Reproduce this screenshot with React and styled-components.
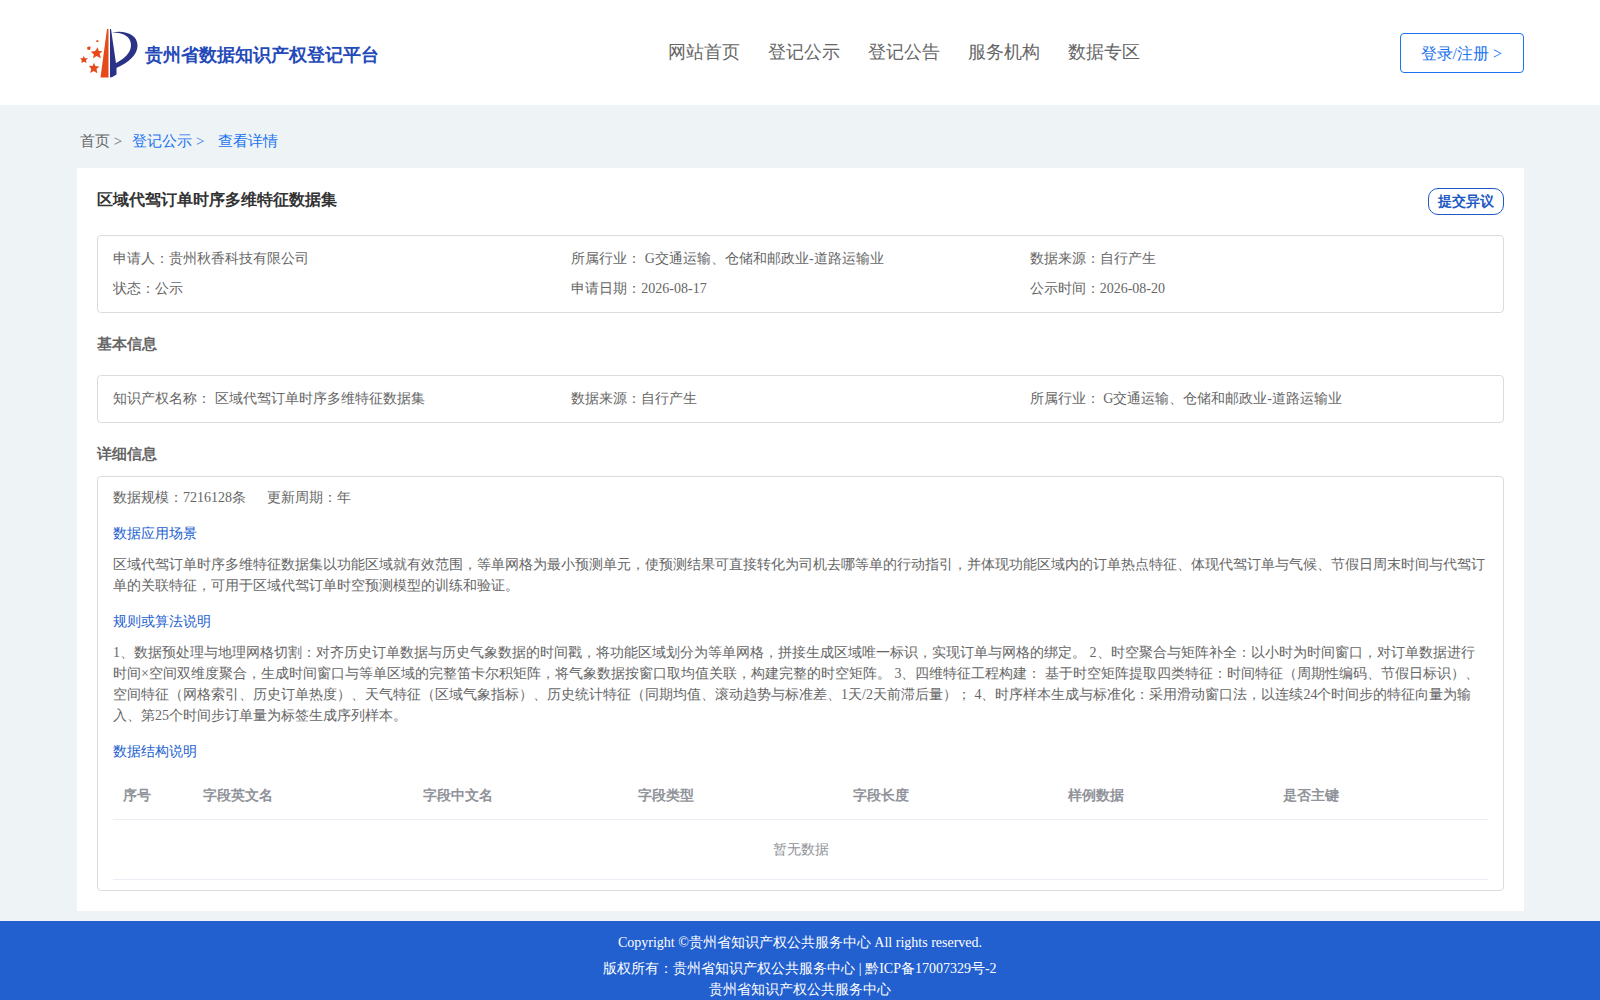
import React from 'react';
import {styled, createGlobalStyle} from 'styled-components';

const navItems = ['网站首页', '登记公示', '登记公告', '服务机构', '数据专区'];

const summary = [
  '申请人：贵州秋香科技有限公司',
  '所属行业： G交通运输、仓储和邮政业-道路运输业',
  '数据来源：自行产生',
  '状态：公示',
  '申请日期：2026-08-17',
  '公示时间：2026-08-20',
];

const basic = [
  '知识产权名称： 区域代驾订单时序多维特征数据集',
  '数据来源：自行产生',
  '所属行业： G交通运输、仓储和邮政业-道路运输业',
];

const columns = [
  {title: '序号', width: '80px'},
  {title: '字段英文名', width: '16%'},
  {title: '字段中文名'},
  {title: '字段类型'},
  {title: '字段长度'},
  {title: '样例数据'},
  {title: '是否主键'},
];

const Logo = () => (
  <svg width="58" height="50" viewBox="0 0 58 50" aria-hidden="true">
    <path d="M27 1L28.500 1V49.500H20.500Z" fill="#e64a19" />
    <path d="M30 1L31 1L36.500 39V46.500Q33 49 30 49.500Z" fill="#2a3287" />
    <path d="M32 4.500C46 2 57 7 57.500 17C58 26 49 35 35 40.500L34.500 36C44 31 51 25 51 17C51 9 44 4.500 32 4.500Z" fill="#2a3287" />
    <g fill="#e64a19">
      <path d="M17.800 19.200L18.700 22.900L22.600 23.300L19.600 25.800L21 30.200L16.600 28L12.900 30.500L13.900 26.400L10.800 23.700L15.200 23.100Z" />
      <path d="M14 34.800L15.500 38.300L19.600 38.500L16.500 41.100L17.400 45.200L13.700 43L10.200 45L11.200 40.900L8.900 37.800L12.600 38.100Z" />
      <path d="M3.500 27.800L5 30.200L8 30.100L5.900 32.300L6.600 35L4 33.800L1.300 35L1.800 32.400L0.300 30.100L2.900 30.300Z" />
      <path d="M9.200 18.200L10.800 19.600L9.800 22L7.600 21.700L7 19.500Z" />
      <path d="M17 12L18.600 12.700L18.300 14L16.600 13.900L16 13Z" />
    </g>
  </svg>
);

const App = () => {
  return (
    <>
      <GlobalStyle />
      <Header>
        <Brand href="#">
          <Logo />
          <span>贵州省数据知识产权登记平台</span>
        </Brand>
        <Nav>
          {navItems.map((item) => (
            <a key={item} href="#">{item}</a>
          ))}
        </Nav>
        <LoginButton type="button">登录/注册 &gt;</LoginButton>
      </Header>

      <Main>
        <Breadcrumb>
          <Crumb href="#">首页 &gt;</Crumb>
          <Crumb href="#" $active>登记公示 &gt;</Crumb>
          <Crumb href="#" $active>查看详情</Crumb>
        </Breadcrumb>

        <Card>
          <TitleRow>
            <h1>区域代驾订单时序多维特征数据集</h1>
            <ObjectionButton type="button">提交异议</ObjectionButton>
          </TitleRow>

          <InfoGrid>
            {summary.map((text) => (
              <span key={text}>{text}</span>
            ))}
          </InfoGrid>

          <SectionTitle $gap="20px">基本信息</SectionTitle>
          <InfoGrid>
            {basic.map((text) => (
              <span key={text}>{text}</span>
            ))}
          </InfoGrid>

          <SectionTitle $gap="11px">详细信息</SectionTitle>
          <Detail>
            <Scale>
              <span>数据规模：7216128条</span>
              <span>更新周期：年</span>
            </Scale>
            <h3>数据应用场景</h3>
            <p>
              区域代驾订单时序多维特征数据集以功能区域就有效范围，等单网格为最小预测单元，使预测结果可直接转化为司机去哪等单的行动指引，并体现功能区域内的订单热点特征、体现代驾订单与气候、节假日周末时间与代驾订单的关联特征，可用于区域代驾订单时空预测模型的训练和验证。
            </p>
            <h3>规则或算法说明</h3>
            <p>
              1、数据预处理与地理网格切割：对齐历史订单数据与历史气象数据的时间戳，将功能区域划分为等单网格，拼接生成区域唯一标识，实现订单与网格的绑定。 2、时空聚合与矩阵补全：以小时为时间窗口，对订单数据进行时间×空间双维度聚合，生成时间窗口与等单区域的完整笛卡尔积矩阵，将气象数据按窗口取均值关联，构建完整的时空矩阵。 3、四维特征工程构建： 基于时空矩阵提取四类特征：时间特征（周期性编码、节假日标识）、空间特征（网格索引、历史订单热度）、天气特征（区域气象指标）、历史统计特征（同期均值、滚动趋势与标准差、1天/2天前滞后量）； 4、时序样本生成与标准化：采用滑动窗口法，以连续24个时间步的特征向量为输入、第25个时间步订单量为标签生成序列样本。
            </p>
            <h3>数据结构说明</h3>
            <Table>
              <colgroup>
                {columns.map((col) => (
                  <Col key={col.title} $width={col.width} />
                ))}
              </colgroup>
              <thead>
                <tr>
                  {columns.map((col) => (
                    <th key={col.title} scope="col">{col.title}</th>
                  ))}
                </tr>
              </thead>
              <tbody>
                <tr>
                  <td colSpan={columns.length}>暂无数据</td>
                </tr>
              </tbody>
            </Table>
          </Detail>
        </Card>
      </Main>

      <Footer>
        <Copyright>Copyright ©贵州省知识产权公共服务中心 All rights reserved.</Copyright>
        <div>版权所有：贵州省知识产权公共服务中心 | 黔ICP备17007329号-2</div>
        <div>贵州省知识产权公共服务中心</div>
      </Footer>
    </>
  );
}

const GlobalStyle = createGlobalStyle`
*{
  box-sizing:border-box;
}
body{
  margin:0;
  background:#eef3f6;
  color:#666;
  font-family:"Liberation Serif",serif;
  font-size:14px;
  line-height:21px;
}
h1,h2,h3,p{
  margin:0;
}
a{
  color:inherit;
  text-decoration:none;
}
button{
  font-family:inherit;
  background:white;
  cursor:pointer;
}
`;

const Header = styled.header`
display:flex;
align-items:center;
justify-content:space-between;
height:105px;
padding:0 76px 0 80px;
background:white;
`;

const Brand = styled.a`
display:flex;
align-items:center;
gap:7px;
color:#2449b8;
font-size:18px;
font-weight:bold;
line-height:24px;

span{
  padding-top:4px;
}
`;

const Nav = styled.nav`
display:flex;
gap:28px;
margin-left:30px;
padding-bottom:2px;
font-size:18px;
line-height:24px;
`;

const LoginButton = styled.button`
height:40px;
padding:3px 21px 0 20px;
border:1px solid #1a73f0;
border-radius:4px;
color:#1a73f0;
font-size:16px;
`;

const Main = styled.main`
padding:0 76px 10px 77px;
`;

const Breadcrumb = styled.nav`
display:flex;
padding:26px 3px 17px;
font-size:15px;
line-height:20px;
`;

const Crumb = styled.a`
margin-right:${(props) => (props.$active ? '14px' : '10px')};
color:${(props) => (props.$active ? '#1a73f0' : '#666')};
`;

const Card = styled.section`
padding:20px;
background:white;
`;

const TitleRow = styled.div`
display:flex;
justify-content:space-between;
align-items:flex-start;
margin-bottom:20px;

h1{
  color:#333;
  font-size:16px;
  line-height:24px;
}
`;

const ObjectionButton = styled.button`
height:27px;
padding:0 9px;
border:1px solid #2058c4;
border-radius:10px;
color:#2058c4;
font-size:14px;
font-weight:bold;
`;

const InfoGrid = styled.div`
display:grid;
grid-template-columns:repeat(3,1fr);
padding:8px 15px;
border:1px solid #dcdcdc;
border-radius:4px;
line-height:30px;
`;

const SectionTitle = styled.h2`
padding:20px 0 ${(props) => props.$gap};
font-size:15px;
line-height:22px;
`;

const Detail = styled.div`
padding:10px 15px;
border:1px solid #dcdcdc;
border-radius:4px;

h3{
  margin:15px 0 10px;
  color:#2260cf;
  font-size:14px;
  font-weight:normal;
}
`;

const Scale = styled.div`
display:flex;
gap:21px;
`;

const Table = styled.table`
width:100%;
table-layout:fixed;
border-collapse:collapse;
color:#909399;

th{
  height:47px;
  padding:0 10px;
  text-align:left;
  border-bottom:1px solid #ebeef5;
}
td{
  height:60px;
  padding:0;
  text-align:center;
  border-bottom:1px solid #ebeef5;
}
`;

const Col = styled.col`
width:${(props) => props.$width || 'auto'};
`;

const Footer = styled.footer`
padding-top:11px;
background:#2260cf;
color:white;
text-align:center;
`;

const Copyright = styled.div`
margin-bottom:5px;
`;

export default App
